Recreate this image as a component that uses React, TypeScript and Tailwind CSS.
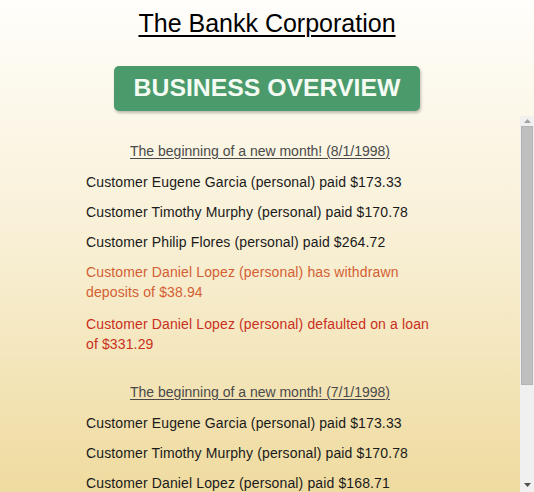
import React from "react";

type Item = { text: string; kind?: "normal" | "withdraw" | "default" };

const sections: { date: string; items: Item[] }[] = [
  {
    date: "8/1/1998",
    items: [
      { text: "Customer Eugene Garcia (personal) paid $173.33" },
      { text: "Customer Timothy Murphy (personal) paid $170.78" },
      { text: "Customer Philip Flores (personal) paid $264.72" },
      { text: "Customer Daniel Lopez (personal) has withdrawn deposits of $38.94", kind: "withdraw" },
      { text: "Customer Daniel Lopez (personal) defaulted on a loan of $331.29", kind: "default" },
    ],
  },
  {
    date: "7/1/1998",
    items: [
      { text: "Customer Eugene Garcia (personal) paid $173.33" },
      { text: "Customer Timothy Murphy (personal) paid $170.78" },
      { text: "Customer Daniel Lopez (personal) paid $168.71" },
      { text: "Customer Philip Flores (personal) paid $264.72" },
    ],
  },
];

function Scrollbar() {
  return (
    <div className="w-[14px] mt-[3px] shrink-0 flex flex-col bg-[#f0f0f0]">
      <div className="h-[10px] flex items-center justify-center">
        <svg width="7" height="4" viewBox="0 0 7 4">
          <path d="M0 4 L3.5 0 L7 4 Z" fill="#a3a3a3" />
        </svg>
      </div>
      <div className="h-[259px] mx-[1px] bg-[#bfbfbf] border border-[#b4b4b4]" />
      <div className="flex-1" />
      <div className="h-[14px] flex items-center justify-center">
        <svg width="7" height="4" viewBox="0 0 7 4">
          <path d="M0 0 L7 0 L3.5 4 Z" fill="#505050" />
        </svg>
      </div>
    </div>
  );
}

export default function App() {
  return (
    <div
      className="h-[492px] w-[534px] flex flex-col overflow-hidden bg-gradient-to-b from-[#fffefb] via-[#f8efd4] to-[#efdb9f]"
      style={{ fontFamily: '"Liberation Sans", Arial, sans-serif' }}
    >
      <div className="flex flex-col items-center shrink-0">
        <h1 className="pt-[9px] text-[25px] leading-[28px] text-black underline decoration-[2px] underline-offset-[3px]">
          The Bankk Corporation
        </h1>
        <div className="mt-[29px] w-[306px] h-[45px] rounded-[5px] bg-[#4a9a6b] flex items-center justify-center shadow-[1px_2px_3px_rgba(0,0,0,0.25)]">
          <span className="text-[24.8px] font-bold text-[#f4fbf3] leading-none">BUSINESS OVERVIEW</span>
        </div>
      </div>
      <div className="mt-[2px] flex-1 flex flex-row min-h-0">
        <div className="flex-1 overflow-hidden">
          <div className="flex flex-col items-center pt-[28px] pb-[30px]">
            {sections.map((s, i) => (
              <div key={i} className={"w-[356px] flex flex-col " + (i > 0 ? "mt-[28px]" : "")}>
                <div className="text-center text-[14px] leading-[20px] text-[#4a4a4a] underline underline-offset-[2px]">
                  The beginning of a new month! ({s.date})
                </div>
                <div className="flex flex-col gap-[10px] mt-[11px] pl-[4px] pr-[2px]">
                  {s.items.map((it, j) => (
                    <div
                      key={j}
                      className={
                        "text-[14px] leading-[20px] tracking-[0.13px] " +
                        (it.kind === "withdraw"
                          ? "text-[#d45f33]"
                          : it.kind === "default"
                          ? "text-[#c9301d] mt-[2px]"
                          : "text-[#1a1a1a]")
                      }
                    >
                      {it.text}
                    </div>
                  ))}
                </div>
              </div>
            ))}
          </div>
        </div>
        <Scrollbar />
      </div>
    </div>
  );
}
